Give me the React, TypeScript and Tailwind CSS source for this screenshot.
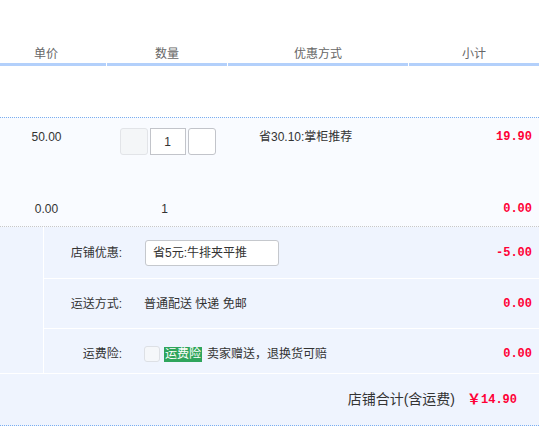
import React from "react";

const red = "text-[#ff0036]";
const num = "font-['Liberation_Mono',monospace] font-bold";

export default function App() {
  return (
    <div className="w-[539px] h-[431px] bg-white text-[12px] text-[#333] font-['Liberation_Sans','Noto_Sans_CJK_SC',sans-serif] pt-[46px]">
      {/* header */}
      <div className="flex gap-px text-[#666]">
        <div className="w-[106px]">
          <div className="leading-[16px] text-center pr-[14px]">单价</div>
          <div className="mt-px h-[3px] bg-[#b3d0fb]" />
        </div>
        <div className="w-[120px]">
          <div className="leading-[16px] text-center">数量</div>
          <div className="mt-px h-[3px] bg-[#b3d0fb]" />
        </div>
        <div className="w-[180px]">
          <div className="leading-[16px] text-center">优惠方式</div>
          <div className="mt-px h-[3px] bg-[#b3d0fb]" />
        </div>
        <div className="w-[130px]">
          <div className="leading-[16px] text-center">小计</div>
          <div className="mt-px h-[3px] bg-[#b3d0fb]" />
        </div>
      </div>

      {/* item */}
      <div className="mt-[51px] border-t border-dotted border-t-[#7aaef0] border-b border-b-[#c8c8c8] bg-[#f9fbff] pt-[10px] pb-[8px]">
        <div className="flex items-start">
          <div className="w-[107px] pr-[14px] text-center leading-[18px] text-[#333]">50.00</div>
          <div className="w-[121px] flex justify-center gap-[2px]">
            <div className="w-[28px] h-[27px] rounded-[3px] border border-[#e2e4e8] bg-[#f4f6f8]" />
            <div className="w-[36px] h-[27px] border border-[#c2c4ca] bg-white flex items-center justify-center text-[12px]">1</div>
            <div className="w-[28px] h-[27px] rounded-[3px] border border-[#c2c4ca] bg-white" />
          </div>
          <div className="w-[181px] pl-[31px] leading-[18px]">省30.10:掌柜推荐</div>
          <div className={`flex-1 text-right pr-[7px] leading-[18px] ${red} ${num}`}>19.90</div>
        </div>
        <div className="flex items-start mt-[45px]">
          <div className="w-[107px] pr-[14px] text-center leading-[18px]">0.00</div>
          <div className="w-[121px] text-center leading-[18px] pr-[6px]">1</div>
          <div className="w-[181px]" />
          <div className={`flex-1 text-right pr-[7px] leading-[18px] ${red} ${num}`}>0.00</div>
        </div>
      </div>

      {/* services */}
      <div className="bg-[#eff4fe] border-b border-dotted border-[#7aaef0]">
        <div className="flex border-b border-white">
          <div className="w-[44px] border-r border-white" />
          <div className="flex-1 flex flex-col">
            <div className="h-[52px] flex items-center border-b border-white">
              <div className="w-[78px] text-right">店铺优惠:</div>
              <div className="ml-[23px] w-[134px] h-[26px] rounded-[3px] border border-[#c5c8cd] bg-white flex items-center pl-[7px]">
                省5元:牛排夹平推
              </div>
              <div className={`flex-1 text-right pr-[7px] ${red} ${num}`}>-5.00</div>
            </div>
            <div className="h-[50px] flex items-center border-b border-white">
              <div className="w-[78px] text-right">运送方式:</div>
              <div className="ml-[22px]">普通配送 快递 免邮</div>
              <div className={`flex-1 text-right pr-[7px] ${red} ${num}`}>0.00</div>
            </div>
            <div className="h-[44px] flex items-center pt-[6px]">
              <div className="w-[78px] text-right">运费险:</div>
              <div className="ml-[22px] w-[16px] h-[16px] rounded-[3px] border border-[#dde0e5] bg-[#f5f7fa]" />
              <div className="ml-[4px] bg-[#2fa55c] text-white px-[1px] leading-[15px]">运费险</div>
              <div className="ml-[5px]">卖家赠送，退换货可赔</div>
              <div className={`flex-1 text-right pr-[7px] ${red} ${num}`}>0.00</div>
            </div>
          </div>
        </div>
        <div className="h-[51px] flex items-center justify-end pr-[22px]">
          <span className="text-[14px] text-[#333]">店铺合计(含运费)</span>
          <span className={`ml-[12px] text-[14px] ${red} font-bold`}>￥</span>
          <span className={`text-[12px] ${red} ${num}`}>14.90</span>
        </div>
      </div>
    </div>
  );
}
